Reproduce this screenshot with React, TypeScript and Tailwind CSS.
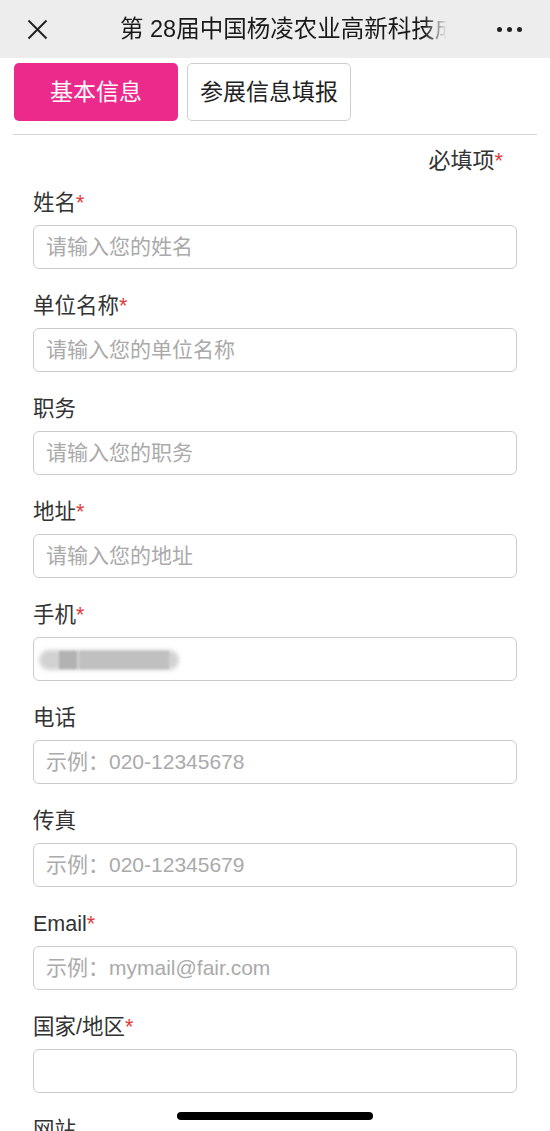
import React from "react";

const font = { fontFamily: '"Liberation Sans", "Noto Sans CJK SC", "Noto Sans", sans-serif' };

type Field = { label: string; req?: boolean; ph?: string; blur?: boolean };

const fields: Field[] = [
  { label: "姓名", req: true, ph: "请输入您的姓名" },
  { label: "单位名称", req: true, ph: "请输入您的单位名称" },
  { label: "职务", ph: "请输入您的职务" },
  { label: "地址", req: true, ph: "请输入您的地址" },
  { label: "手机", req: true, blur: true },
  { label: "电话", ph: "示例：020-12345678" },
  { label: "传真", ph: "示例：020-12345679" },
  { label: "Email", req: true, ph: "示例：mymail@fair.com" },
  { label: "国家/地区", req: true, ph: "" },
];

export default function App() {
  return (
    <div className="w-[550px] h-[1131px] overflow-hidden bg-white relative" style={font}>
      <div className="h-[58px] bg-[#ededed] flex items-center px-[27px]">
        <svg width="21" height="21" viewBox="0 0 21 21" className="shrink-0">
          <path d="M1.5 1.5 L19.5 19.5 M19.5 1.5 L1.5 19.5" stroke="#222" strokeWidth="2" />
        </svg>
        <div className="ml-[72px] w-[327px] overflow-hidden whitespace-nowrap text-[23.5px] leading-[30px] text-[#1a1a1a] [mask-image:linear-gradient(to_right,black_93%,transparent)]">
          第 28届中国杨凌农业高新科技成果博览会
        </div>
        <div className="ml-auto flex gap-[5px] items-center pr-[1px]">
          <span className="w-[5px] h-[5px] rounded-full bg-[#222]" />
          <span className="w-[5px] h-[5px] rounded-full bg-[#222]" />
          <span className="w-[5px] h-[5px] rounded-full bg-[#222]" />
        </div>
      </div>

      <div className="px-[13px]">
        <div className="flex gap-[9px] pt-[5px] pl-[1px]">
          <div className="w-[164px] h-[58px] rounded-[5px] bg-[#ec2a8b] text-white text-[23px] flex items-center justify-center">
            基本信息
          </div>
          <div className="w-[164px] h-[58px] rounded-[5px] bg-white border border-[#cfcfcf] text-[#222] text-[23px] flex items-center justify-center">
            参展信息填报
          </div>
        </div>
        <div className="mt-[13px] h-[1px] bg-[#d6d6d6]" />
        <div className="mt-[12px] text-right pr-[34px] text-[22px] leading-[28px] text-[#333]">
          必填项<span className="text-[#e23b3b]">*</span>
        </div>
      </div>

      <div className="pl-[33px] pr-[33px] mt-[14px]">
        {fields.map((f) => (
          <div key={f.label} className="mb-[23px]">
            <div className="text-[21.5px] leading-[28px] text-[#333]">
              {f.label}
              {f.req && <span className="text-[#e23b3b]">*</span>}
            </div>
            <div className="mt-[8px] h-[44px] rounded-[6px] border border-[#cccccc] flex items-center pl-[12px] text-[21px] text-[#aaaaaa] relative overflow-hidden">
              {f.blur ? (
                <div className="absolute left-[5px] top-[10px] w-[140px] h-[22px]">
                  <div className="absolute left-0 top-[2px] w-[140px] h-[20px] rounded-full bg-[#d2d2d2] blur-[2px]" />
                  <div className="absolute left-[20px] top-[3px] w-[18px] h-[18px] bg-[#b2b2b2] blur-[1px]" />
                  <div className="absolute left-[40px] top-[3px] w-[90px] h-[18px] bg-[#c0c0c0] blur-[1px]" />
                </div>
              ) : (
                f.ph
              )}
            </div>
          </div>
        ))}
        <div className="text-[21.5px] leading-[28px] text-[#333]">网站</div>
      </div>

      <div className="absolute left-[177px] top-[1112px] w-[196px] h-[8px] rounded-full bg-black" />
    </div>
  );
}
